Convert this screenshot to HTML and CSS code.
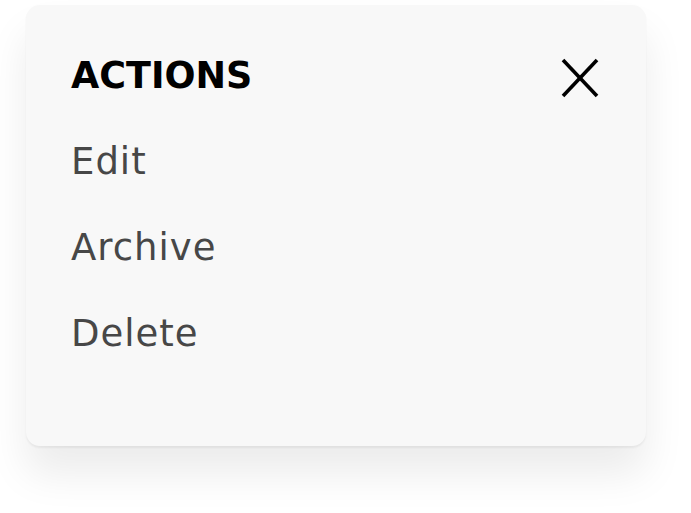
FILE: index.html
```html
<!DOCTYPE html>
<html lang="en">
<head>
<meta charset="utf-8">
<title>Actions</title>
<link rel="stylesheet" href="styles.css">
</head>
<body>
<div class="card">
  <div class="header">
    <span class="title">ACTIONS</span>
    <svg class="close" width="38" height="40" viewBox="0 0 38 40" aria-label="Close">
      <line x1="2" y1="2" x2="36" y2="38" stroke="#000" stroke-width="3.6"/>
      <line x1="36" y1="2" x2="2" y2="38" stroke="#000" stroke-width="3.6"/>
    </svg>
  </div>
  <ul class="menu">
    <li class="item">Edit</li>
    <li class="item">Archive</li>
    <li class="item">Delete</li>
  </ul>
</div>
</body>
</html>
```
FILE: styles.css
```css
html, body {
  margin: 0;
  padding: 0;
  background: #ffffff;
}
body {
  font-family: "DejaVu Sans", Inter, sans-serif;
  padding: 5px 0 0 26px;
  min-height: 100vh;
  box-sizing: border-box;
}
.card {
  width: 620px;
  box-sizing: border-box;
  height: 441px;
  background: #f8f8f8;
  border-radius: 14px;
  padding: 28px 47px 0 45px;
  box-shadow: 0 2px 2px rgba(0, 0, 0, 0.05), 0 28px 40px rgba(0, 0, 0, 0.08);
}
.header {
  display: flex;
  justify-content: space-between;
  align-items: center;
  height: 86px;
}
.title {
  font-size: 36.5px;
  font-weight: 700;
  color: #000;
  line-height: 86px;
}
.close {
  display: block;
  margin-top: 4px;
}
.menu {
  list-style: none;
  margin: 0;
  padding: 0;
}
.item {
  font-size: 37px;
  letter-spacing: 1px;
  color: #474747;
  line-height: 86px;
}
```
